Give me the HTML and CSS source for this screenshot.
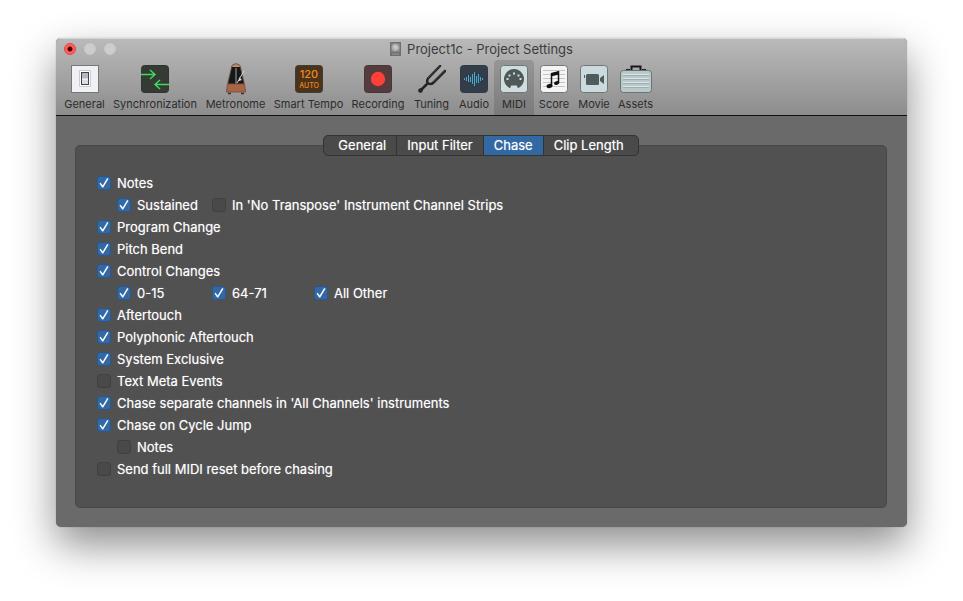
FILE: index.html
```html
<!DOCTYPE html>
<html lang="en">
<head>
  <meta charset="UTF-8">
  <title>Project1c - Project Settings</title>
  <meta name="viewport" content="width=device-width, initial-scale=1.0">
  <link rel="stylesheet" href="styles.css">
</head>
<body>
  <main class="window">
    <header class="window-header">
      <div class="titlebar">
        <div class="lights">
          <button class="light close" aria-label="Close"></button>
          <button class="light" aria-label="Minimize" disabled></button>
          <button class="light" aria-label="Zoom" disabled></button>
        </div>
        <h1 class="title">
          <svg width="11" height="14" viewBox="0 0 11 14">
            <rect width="11" height="14" fill="#6f6f6f"/>
            <rect x="1" y="1" width="9" height="9" fill="#858585"/>
            <circle cx="5.500" cy="5.500" r="3.800" fill="#a9adad"/>
            <path d="M3 4l3-1 2 3-3 2z" fill="#c5cbcc"/>
            <path d="M2 12h7" stroke="#989898"/>
          </svg>
          Project1c - Project Settings
        </h1>
      </div>

      <nav class="toolbar">
        <button class="tool">
          <svg width="28" height="28" viewBox="0 0 28 28">
            <rect x=".5" y=".5" width="27" height="27" fill="#eff1f5" stroke="#777"/>
            <rect x="8" y="5" width="12" height="17" rx="1" fill="#c9cbce"/>
            <rect x="9" y="6" width="10" height="15" fill="#fff"/>
            <rect x="10.500" y="7.500" width="7" height="12" fill="#d9dce1" stroke="#3e4249"/>
            <rect x="11" y="8" width="6" height="6" fill="#b4b8be"/>
            <path d="M11 14h6" stroke="#fff"/>
          </svg>
          <span>General</span>
        </button>
        <button class="tool">
          <svg width="28" height="28" viewBox="0 0 28 28">
            <rect x=".5" y=".5" width="27" height="27" rx="3" fill="#343b34" stroke="#2e342e"/>
            <path d="M0 9.500h14M9 5l5 4.500L9 14M28 19.500H14M19 15l-5 4.500 5 4.500" fill="none" stroke="#3fdc5c" stroke-width="1.400"/>
          </svg>
          <span>Synchronization</span>
        </button>
        <button class="tool">
          <svg width="28" height="32" viewBox="0 -1 28 32">
            <path d="M10 1.500Q14-2 18 1.500l4.500 19h-17z" fill="#c58968" stroke="#68554b"/>
            <path d="M10 3h8l4 17h-16z" fill="#151719"/>
            <path d="M14 4v16" stroke="#777" stroke-width="1.500"/>
            <path d="M22 7l-7 12" stroke="#d6d8d8" stroke-width="1"/>
            <path d="M17 13l3 3-3 1z" fill="#d6d8d8"/>
            <path d="M5.500 20h17l1 8h-19z" fill="#a76548" stroke="#83513e"/>
            <path d="M6 29.500h3m10 0h3" stroke="#38302d" stroke-width="1.500"/>
          </svg>
          <span>Metronome</span>
        </button>
        <button class="tool">
          <svg width="28" height="28" viewBox="0 0 28 28">
            <rect x=".5" y=".5" width="27" height="27" rx="3" fill="#49331b" stroke="#443b30"/>
            <text class="tempo" x="14" y="13">120</text>
            <text class="tempo-auto" x="14" y="23">AUTO</text>
          </svg>
          <span>Smart Tempo</span>
        </button>
        <button class="tool">
          <svg width="28" height="28" viewBox="0 0 28 28">
            <rect x=".5" y=".5" width="27" height="27" rx="3" fill="#553b3e" stroke="#48373a"/>
            <circle cx="14" cy="14" r="7.200" fill="#ff4038"/>
          </svg>
          <span>Recording</span>
        </button>
        <button class="tool">
          <svg width="28" height="28" viewBox="0 0 28 28">
            <path d="M22 1L10 13.500Q8 17 10.500 18.500Q13 20 15.500 17.500L27 6M9.500 18.500L2 26" fill="none" stroke="#242424" stroke-width="2.500" stroke-linecap="round"/>
            <circle cx="2.500" cy="25.500" r="2.300" fill="#242424"/>
            <path d="M21.500 1L10 13M26.500 6L15 17" stroke="#666" stroke-width=".5"/>
          </svg>
          <span>Tuning</span>
        </button>
        <button class="tool">
          <svg width="28" height="28" viewBox="0 0 28 28">
            <rect x=".5" y=".5" width="27" height="27" rx="3" fill="#323d4a" stroke="#303944"/>
            <path d="M4.500 13v2M6.500 12v4M8.500 10v7M10.500 12v5M12.500 9v10M14.500 7v14M16.500 11v7M18.500 9v9M20.500 12v4M22.500 13v2" stroke="#47a9d0"/>
          </svg>
          <span>Audio</span>
        </button>
        <button class="tool selected" aria-current="page">
          <svg width="28" height="28" viewBox="0 0 28 28">
            <rect x=".5" y=".5" width="27" height="27" rx="3" fill="#d0dddf" stroke="#707676"/>
            <path d="M10 23.200A10 10 0 1 1 18 23.200L16.800 20.500h-5.600z" fill="#4e5958"/>
            <g fill="#d0dddf">
              <rect x="6.500" y="13" width="2" height="2"/>
              <rect x="8.500" y="9.500" width="2" height="2"/>
              <rect x="13" y="7.500" width="2" height="2"/>
              <rect x="17.500" y="9.500" width="2" height="2"/>
              <rect x="19.500" y="13" width="2" height="2"/>
            </g>
          </svg>
          <span>MIDI</span>
        </button>
        <button class="tool">
          <svg width="28" height="28" viewBox="0 0 28 28">
            <rect x=".5" y=".5" width="27" height="27" rx="3" fill="#f4f4f4" stroke="#777"/>
            <path d="M3 5.500h22M3 9.500h22M3 13.500h22M3 17.500h22M3 21.500h22" stroke="#c5c5c5"/>
            <path d="M11.500 21V9l7-2v10.500" fill="none" stroke="#111" stroke-width="1.500"/>
            <path d="M11 8l8-2v3.500l-8 2z" fill="#111"/>
            <ellipse cx="9.500" cy="21" rx="3" ry="2" fill="#111" transform="rotate(-15 9.500 21)"/>
            <ellipse cx="16.700" cy="18" rx="2.700" ry="1.900" fill="#111" transform="rotate(-15 16.700 18)"/>
          </svg>
          <span>Score</span>
        </button>
        <button class="tool">
          <svg width="28" height="28" viewBox="0 0 28 28">
            <rect x=".5" y=".5" width="27" height="27" rx="3" fill="#cbdadd" stroke="#707676"/>
            <rect x="6" y="9" width="13" height="11" rx="1.500" fill="#505c5b"/>
            <path d="M20 13l4-3v9l-4-3zM4 10h1v3H4z" fill="#505c5b"/>
          </svg>
          <span>Movie</span>
        </button>
        <button class="tool">
          <svg width="32" height="28" viewBox="0 0 32 28">
            <path d="M11.500 5V1.500h9V5" fill="none" stroke="#171919" stroke-width="2"/>
            <path d="M6 4.500h4m12 0h4" stroke="#222"/>
            <rect x=".5" y="5.500" width="31" height="22" rx="3" fill="#b9c8c9" stroke="#697373"/>
            <path d="M3 9.500h26M3 13.500h26M3 17.500h26M3 21.500h26" stroke="#d9e5e6"/>
            <path d="M3 10.500h26M3 14.500h26M3 18.500h26M3 22.500h26" stroke="#9fadae"/>
          </svg>
          <span>Assets</span>
        </button>
      </nav>
    </header>

    <div class="content">
      <div class="tabs" role="tablist">
        <button class="tab" role="tab">General</button>
        <button class="tab" role="tab">Input Filter</button>
        <button class="tab active" role="tab" aria-selected="true">Chase</button>
        <button class="tab" role="tab">Clip Length</button>
      </div>

      <form class="panel">
        <label class="option"><input type="checkbox" checked>Notes</label>
        <div class="sub-options">
          <label class="option"><input type="checkbox" checked>Sustained</label>
          <label class="option wide"><input type="checkbox">In 'No Transpose' Instrument Channel Strips</label>
        </div>
        <label class="option"><input type="checkbox" checked>Program Change</label>
        <label class="option"><input type="checkbox" checked>Pitch Bend</label>
        <label class="option"><input type="checkbox" checked>Control Changes</label>
        <div class="sub-options">
          <label class="option"><input type="checkbox" checked>0-15</label>
          <label class="option"><input type="checkbox" checked>64-71</label>
          <label class="option"><input type="checkbox" checked>All Other</label>
        </div>
        <label class="option"><input type="checkbox" checked>Aftertouch</label>
        <label class="option"><input type="checkbox" checked>Polyphonic Aftertouch</label>
        <label class="option"><input type="checkbox" checked>System Exclusive</label>
        <label class="option"><input type="checkbox">Text Meta Events</label>
        <label class="option"><input type="checkbox" checked>Chase separate channels in 'All Channels' instruments</label>
        <label class="option"><input type="checkbox" checked>Chase on Cycle Jump</label>
        <div class="sub-options">
          <label class="option"><input type="checkbox">Notes</label>
        </div>
        <label class="option"><input type="checkbox">Send full MIDI reset before chasing</label>
      </form>
    </div>
  </main>
</body>
</html>
```
FILE: styles.css
```css
* {
  box-sizing: border-box;
}

body {
  margin: 0;
  min-height: 100vh;
  padding: 38px 56px;
  background: #fff;
  font-family: Inter, "Liberation Sans", sans-serif;
  font-size: 13px;
}

button {
  margin: 0;
  padding: 0;
  border: none;
  background: none;
  font: inherit;
  color: inherit;
}

.window {
  border-radius: 5px;
  overflow: hidden;
  background: #6a6a6a;
  box-shadow: 0 0 1px rgba(0, 0, 0, 0.4), 0 18px 42px rgba(0, 0, 0, 0.45);
}

.window-header {
  border-bottom: 1px solid #111;
  background: linear-gradient(#bababa, #8d8d8d);
  box-shadow: inset 0 1px #d5d5d5;
}

/* title bar */
.titlebar {
  display: grid;
  grid-template-columns: 1fr auto 1fr;
  align-items: center;
  height: 22px;
  padding: 0 8px;
}

.lights {
  display: flex;
  gap: 8px;
}

.light {
  width: 12px;
  height: 12px;
  border: 1px solid #c8c8c8;
  border-radius: 50%;
  background: #cdcdcd;
}

.light.close {
  border-color: #df4744;
  background: radial-gradient(circle, #4d0000 2px, #ff5f57 3px);
}

.title {
  display: flex;
  align-items: center;
  gap: 6px;
  margin: 0;
  font-size: 13px;
  font-weight: 400;
  line-height: 22px;
  color: #3c3c3c;
}

/* toolbar */
.toolbar {
  display: grid;
  grid-template-columns: 49px 92px 69px 77px 62px 45px 40px 40px 40px 40px 43px;
  padding: 0 4px;
}

.tool {
  display: flex;
  flex-direction: column;
  align-items: center;
  justify-content: flex-end;
  height: 55px;
  padding-bottom: 4px;
  border-radius: 4px 4px 0 0;
  font-size: 11px;
  line-height: 14px;
  white-space: nowrap;
  color: #2c2c2c;
}

.tool svg {
  flex: none;
  margin-bottom: 4px;
}

.tool svg[height="32"] {
  margin-bottom: 2px;
}

.tool.selected {
  background: rgba(0, 0, 0, 0.13);
}

.tempo,
.tempo-auto {
  fill: #f18a1c;
  font-size: 11px;
  font-weight: 500;
  text-anchor: middle;
}

.tempo-auto {
  font-size: 7px;
}

/* tabs and options */
.content {
  padding: 19px 20px 19px 19px;
}

.tabs {
  position: relative;
  display: flex;
  width: fit-content;
  margin: 0 auto -11px;
  border: 1px solid #333;
  border-radius: 5px;
  overflow: hidden;
  background: #4a4a4a;
}

.tab {
  height: 19px;
  padding: 0 10px;
  line-height: 19px;
  color: #fff;
  text-shadow: 0 0 1px rgba(255, 255, 255, 0.5);
}

.tab:first-child {
  padding-left: 14px;
}

.tab:last-child {
  padding-right: 14px;
}

.tab + .tab {
  border-left: 1px solid #333;
}

.tab.active {
  background: #3269a3;
}

.panel {
  padding: 26px 21px 27px;
  border: 1px solid #474747;
  border-radius: 5px;
  background: #515151;
}

.option {
  display: flex;
  align-items: center;
  gap: 6px;
  height: 22px;
  line-height: 22px;
  white-space: nowrap;
  color: #fff;
  text-shadow: 0 0 1px rgba(255, 255, 255, 0.5);
}

.sub-options {
  display: grid;
  grid-template-columns: 95px 102px 1fr;
  padding-left: 20px;
}

.wide {
  grid-column: span 2;
}

input[type="checkbox"] {
  display: grid;
  place-items: center;
  appearance: none;
  flex: none;
  width: 14px;
  height: 14px;
  margin: 0;
  border: 1px solid #404040;
  border-radius: 3px;
  background: #494949;
}

input[type="checkbox"]:checked {
  border-color: #28588c;
  background: #3269a5;
}

/* check mark */
input[type="checkbox"]:checked::after {
  content: "";
  width: 10px;
  height: 10px;
  background: #fff;
  clip-path: polygon(5% 56%, 16% 48%, 37% 74%, 82% 0, 95% 8%, 42% 96%, 32% 96%);
}
```
